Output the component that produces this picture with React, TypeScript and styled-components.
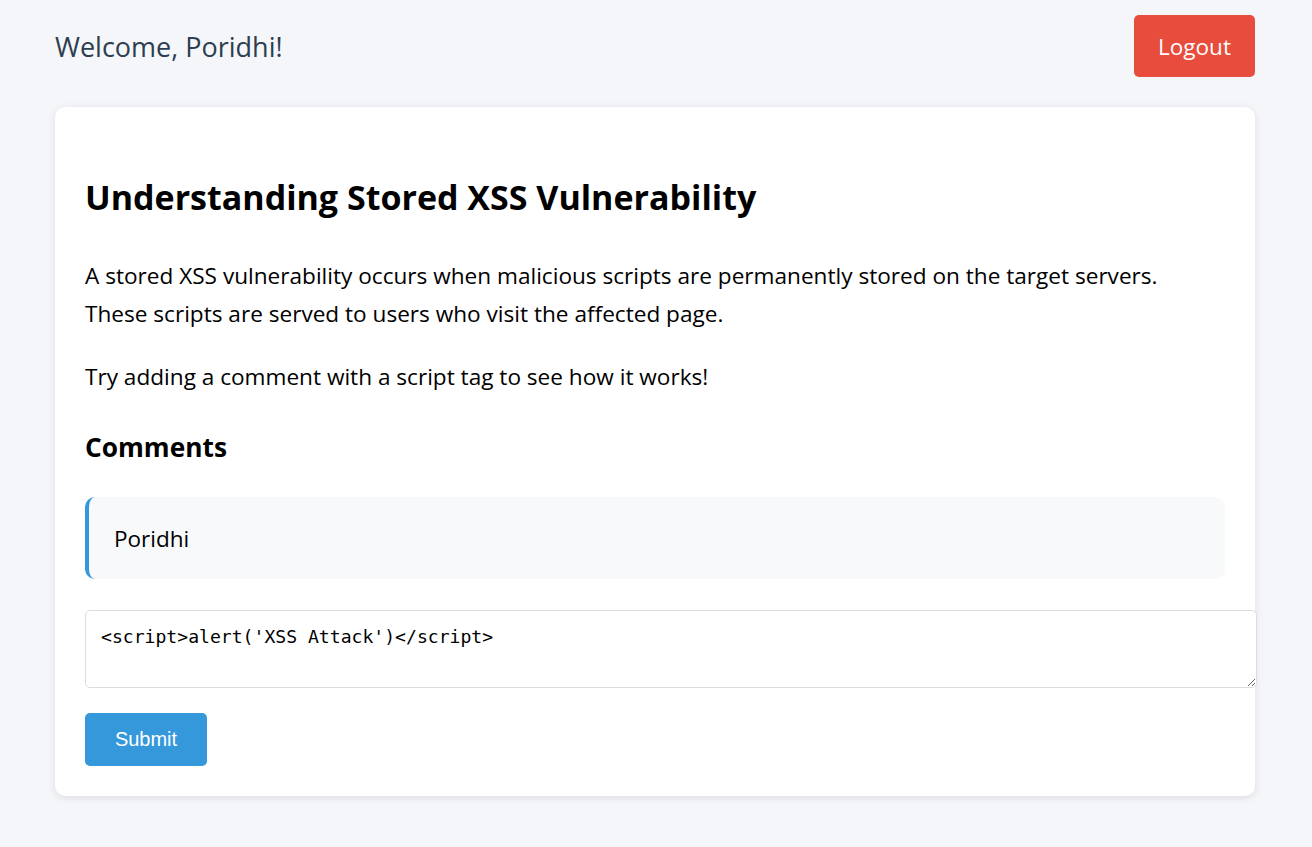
import React from "react";
import styled, { createGlobalStyle } from "styled-components";

const Global = createGlobalStyle`
  html, body { margin: 0; padding: 0; background: #f5f6fa; }
  body { font-family: "Open Sans", "Noto Sans", sans-serif; color: #000; }
  * { box-sizing: border-box; }
`;

const Page = styled.div`
  width: 1200px;
  margin: 0 0 0 55px;
  padding-top: 15px;
  padding-bottom: 51px;
`;

const Header = styled.header`
  display: flex;
  justify-content: space-between;
  align-items: center;
  height: 62px;
  margin-bottom: 30px;
`;

const Welcome = styled.h2`
  margin: 2px 0 0;
  font-size: 27px;
  line-height: 36px;
  font-weight: 400;
  color: #2c3e50;
`;

const LogoutButton = styled.button`
  width: 121px;
  height: 62px;
  padding: 0;
  border: none;
  border-radius: 5px;
  background: #e74c3c;
  color: #fff;
  font-family: "Open Sans", sans-serif;
  font-size: 22.5px;
  cursor: pointer;
`;

const Card = styled.main`
  background: #fff;
  border-radius: 10px;
  box-shadow: 0 2px 8px rgba(0, 0, 0, 0.1);
  padding: 30px;
`;

const Title = styled.h1`
  margin: 38px 0 38px;
  font-size: 34px;
  line-height: 44px;
  font-weight: 700;
`;

const Para = styled.p<{ $gap?: number }>`
  margin: 0 0 ${(p) => p.$gap ?? 25}px;
  font-size: 22.6px;
  line-height: 38px;
`;

const SubTitle = styled.h3`
  margin: 35px 0 34px;
  font-size: 26.3px;
  line-height: 32px;
  font-weight: 700;
`;

const Comment = styled.div`
  background: #f8f9fa;
  border-left: 4px solid #3498db;
  border-radius: 10px;
  padding: 0 25px;
  height: 82px;
  display: flex;
  align-items: center;
  font-size: 22.5px;
  margin-bottom: 31px;
`;

const TextArea = styled.textarea`
  display: block;
  width: calc(100% + 32px);
  height: 78px;
  padding: 15px;
  border: 1px solid #ddd;
  border-radius: 5px;
  font-family: "DejaVu Sans Mono", "Liberation Mono", monospace;
  font-size: 18.1px;
  line-height: 22px;
  color: #000;
  margin-bottom: 25px;
  resize: vertical;
`;

const SubmitButton = styled.button`
  width: 122px;
  height: 53px;
  padding: 0;
  border: none;
  border-radius: 5px;
  background: #3498db;
  color: #fff;
  font-family: "Liberation Sans", Arial, sans-serif;
  font-size: 20px;
  cursor: pointer;
`;

export default function App() {
  return (
    <>
      <Global />
      <Page>
        <Header>
          <Welcome>Welcome, Poridhi!</Welcome>
          <LogoutButton>Logout</LogoutButton>
        </Header>
        <Card>
          <Title>Understanding Stored XSS Vulnerability</Title>
          <Para>
            A stored XSS vulnerability occurs when malicious scripts are permanently stored on the target servers.
            These scripts are served to users who visit the affected page.
          </Para>
          <Para $gap={0}>Try adding a comment with a script tag to see how it works!</Para>
          <SubTitle>Comments</SubTitle>
          <Comment>Poridhi</Comment>
          <TextArea defaultValue={"<script>alert('XSS Attack')</script>"} />
          <SubmitButton>Submit</SubmitButton>
        </Card>
      </Page>
    </>
  );
}
